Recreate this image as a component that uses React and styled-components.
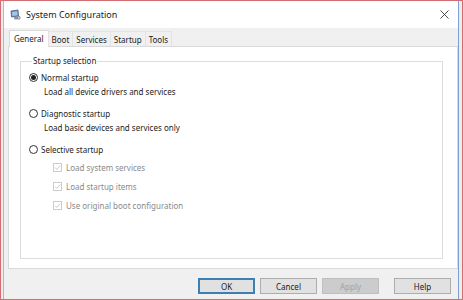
import React from "react";
import styled, { createGlobalStyle } from "styled-components";

const GlobalStyle = createGlobalStyle`
  html, body { margin: 0; padding: 0; background: #ffffff; }
  body { font-family: "Noto Sans", "Open Sans", sans-serif; }
`;

const FONT = `"Noto Sans", "Open Sans", sans-serif`;

const Frame = styled.div`
  width: 463px;
  height: 300px;
  box-sizing: border-box;
  border: 1px solid #d26d72;
  background: #ececec;
  display: flex;
`;

const Dialog = styled.div`
  flex: 1;
  margin: 0 3px 0 2px;
  border-left: 1px solid #e3a5a8;
  border-right: 1px solid #7f9fcf;
  display: flex;
  flex-direction: column;
  font-family: ${FONT};
  color: #1b1b1b;
`;

const TitleBar = styled.div`
  height: 27px;
  background: #ffffff;
  display: flex;
  align-items: center;
  padding: 0 9px 0 6px;
  gap: 5px;
`;

const Title = styled.span`
  flex: 1;
  font-size: 9px;
  color: #1a1a1a;
`;

const Body = styled.div`
  flex: 1;
  background: #f0f0f0;
  padding: 0 0 0 4px;
  display: flex;
  flex-direction: column;
`;

const TabStrip = styled.div`
  height: 18px;
  display: flex;
  align-items: flex-end;
  padding-left: 1px;
  position: relative;
  z-index: 1;
`;

const Tab = styled.div`
  height: ${(p) => (p.$active ? "17px" : "15px")};
  box-sizing: border-box;
  padding: 0 ${(p) => (p.$active ? "4px" : "3px")};
  display: flex;
  align-items: center;
  font-size: 8px;
  color: #1b1b1b;
  background: ${(p) => (p.$active ? "#ffffff" : "#f0f0f0")};
  border: 1px solid ${(p) => (p.$active ? "#d9d9d9" : "#e3e3e3")};
  border-bottom: none;
  margin-bottom: ${(p) => (p.$active ? "-1px" : "0")};
  margin-left: ${(p) => (p.$first ? "0" : "-1px")};
  ${(p) => (p.$active ? "padding-bottom: 1px;" : "")}
`;

const Panel = styled.div`
  height: 223px;
  box-sizing: border-box;
  background: #ffffff;
  border: 1px solid #d9d9d9;
  padding: 8px 14px 9px 11px;
  display: flex;
  flex-direction: column;
`;

const Group = styled.fieldset`
  flex: 1;
  margin: 0;
  padding: 0 0 0 8px;
  border: 1px solid #dcdcdc;
  min-width: 0;
`;

const Legend = styled.legend`
  margin-left: 3px;
  padding: 0 1px;
  font-size: 8px;
  line-height: 12px;
  color: #1b1b1b;
`;

const Options = styled.div`
  padding-top: 3px;
  display: flex;
  flex-direction: column;
`;

const RadioRow = styled.div`
  height: 14px;
  display: flex;
  align-items: center;
  gap: 3px;
  font-size: 8px;
  margin-top: ${(p) => (p.$first ? "0" : "8px")};
`;

const Radio = styled.span`
  width: 9px;
  height: 9px;
  box-sizing: border-box;
  border-radius: 50%;
  border: 1px solid #333333;
  background: #ffffff;
  display: flex;
  align-items: center;
  justify-content: center;
  &::after {
    content: "";
    width: 5px;
    height: 5px;
    border-radius: 50%;
    background: ${(p) => (p.$checked ? "#222222" : "transparent")};
  }
`;

const Description = styled.div`
  height: 14px;
  display: flex;
  align-items: center;
  padding-left: 15px;
  font-size: 8px;
`;

const Checks = styled.div`
  display: flex;
  flex-direction: column;
  gap: 5px;
  margin-top: 4px;
  padding-left: 24px;
`;

const CheckRow = styled.div`
  height: 14px;
  display: flex;
  align-items: center;
  gap: 4px;
  font-size: 8px;
  color: #8a8a8a;
`;

const CheckBox = styled.span`
  width: 9px;
  height: 9px;
  box-sizing: border-box;
  border: 1px solid #cccccc;
  background: #ffffff;
  display: flex;
  align-items: center;
  justify-content: center;
`;

const Footer = styled.div`
  flex: 1;
  display: flex;
  justify-content: flex-end;
  align-items: flex-start;
  padding: 9px 7px 0 0;
  gap: 5px;
`;

const Button = styled.button`
  width: 57px;
  height: 16px;
  box-sizing: border-box;
  margin: 0 0 0 ${(p) => (p.$spaced ? "10px" : "0")};
  padding: 0;
  font-family: ${FONT};
  font-size: 8px;
  color: ${(p) => (p.$disabled ? "#a3a3a3" : "#1b1b1b")};
  background: ${(p) => (p.$disabled ? "#cccccc" : "#e1e1e1")};
  border: 1px solid
    ${(p) => (p.$default ? "#3c7fb1" : p.$disabled ? "#bfbfbf" : "#adadad")};
  ${(p) => (p.$default ? "box-shadow: inset 0 0 0 1px #3c7fb1;" : "")}
`;

const AppIcon = () => (
  <svg width="11" height="11" viewBox="0 0 11 11">
    <path d="M1 2 L8 1 L8.5 7 L1.5 8 Z" fill="#6d86b8" stroke="#3c4f7a" strokeWidth="0.7" />
    <path d="M2 3 L7.2 2.3 L7.6 6.3 L2.4 7 Z" fill="#a9c2e8" />
    <path d="M4 8 L9.5 7.5 L10 10 L4.5 10.5 Z" fill="#8a8f99" />
    <circle cx="8.8" cy="8.8" r="1.5" fill="#c9ccd2" stroke="#5b5f66" strokeWidth="0.5" />
  </svg>
);

const CloseIcon = () => (
  <svg width="9" height="9" viewBox="0 0 9 9">
    <path d="M0.5 0.5 L8.5 8.5 M8.5 0.5 L0.5 8.5" stroke="#333333" strokeWidth="0.9" />
  </svg>
);

const Tick = () => (
  <svg width="7" height="7" viewBox="0 0 7 7">
    <path d="M1 3.6 L2.8 5.4 L6.2 1.6" fill="none" stroke="#c4c4c4" strokeWidth="0.9" />
  </svg>
);

const tabs = ["General", "Boot", "Services", "Startup", "Tools"];
const checks = ["Load system services", "Load startup items", "Use original boot configuration"];

export default function App() {
  return (
    <>
      <GlobalStyle />
      <Frame>
        <Dialog>
          <TitleBar>
            <AppIcon />
            <Title>System Configuration</Title>
            <CloseIcon />
          </TitleBar>
          <Body>
            <TabStrip>
              {tabs.map((t, i) => (
                <Tab key={t} $active={i === 0} $first={i === 0}>
                  {t}
                </Tab>
              ))}
            </TabStrip>
            <Panel>
              <Group>
                <Legend>Startup selection</Legend>
                <Options>
                  <RadioRow $first>
                    <Radio $checked />
                    Normal startup
                  </RadioRow>
                  <Description>Load all device drivers and services</Description>
                  <RadioRow>
                    <Radio />
                    Diagnostic startup
                  </RadioRow>
                  <Description>Load basic devices and services only</Description>
                  <RadioRow>
                    <Radio />
                    Selective startup
                  </RadioRow>
                  <Checks>
                    {checks.map((c) => (
                      <CheckRow key={c}>
                        <CheckBox>
                          <Tick />
                        </CheckBox>
                        {c}
                      </CheckRow>
                    ))}
                  </Checks>
                </Options>
              </Group>
            </Panel>
            <Footer>
              <Button $default>OK</Button>
              <Button>Cancel</Button>
              <Button $disabled>Apply</Button>
              <Button $spaced>Help</Button>
            </Footer>
          </Body>
        </Dialog>
      </Frame>
    </>
  );
}
